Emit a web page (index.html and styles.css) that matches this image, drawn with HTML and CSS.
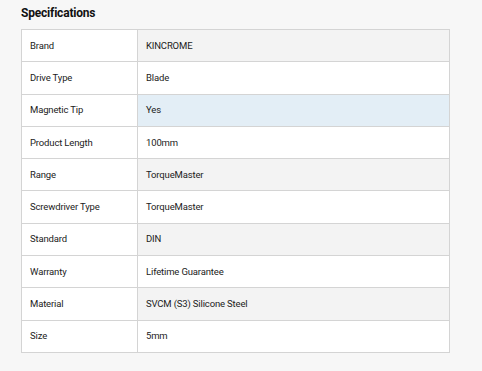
FILE: index.html
```html
<!DOCTYPE html>
<html>
<head>
<meta charset="utf-8">
<link rel="stylesheet" href="styles.css">
</head>
<body>
<div class="specs">
  <h2 class="specs-title">Specifications</h2>
  <table class="specs-table">
    <colgroup><col class="col-label"><col class="col-value"></colgroup>
    <tbody>
      <tr class="odd"><td class="label">Brand</td><td class="value">KINCROME</td></tr>
      <tr><td class="label">Drive Type</td><td class="value">Blade</td></tr>
      <tr class="odd hover"><td class="label">Magnetic Tip</td><td class="value">Yes</td></tr>
      <tr><td class="label">Product Length</td><td class="value">100mm</td></tr>
      <tr class="odd"><td class="label">Range</td><td class="value">TorqueMaster</td></tr>
      <tr><td class="label">Screwdriver Type</td><td class="value">TorqueMaster</td></tr>
      <tr class="odd"><td class="label">Standard</td><td class="value">DIN</td></tr>
      <tr><td class="label">Warranty</td><td class="value">Lifetime Guarantee</td></tr>
      <tr class="odd"><td class="label">Material</td><td class="value">SVCM (S3) Silicone Steel</td></tr>
      <tr><td class="label">Size</td><td class="value">5mm</td></tr>
    </tbody>
  </table>
</div>
</body>
</html>
```
FILE: styles.css
```css
html, body {
  margin: 0;
  padding: 0;
  background: #f7f7f7;
}
body {
  font-family: "Roboto", "Liberation Sans", sans-serif;
  color: #222;
}
.specs {
  padding: 5px 32px 0 21px;
}
.specs-title {
  margin: 0 0 8px 0;
  font-size: 12px;
  line-height: 16px;
  font-weight: 700;
  color: #111;
  letter-spacing: -0.2px;
}
.specs-table {
  width: 429px;
  table-layout: fixed;
  border-collapse: collapse;
  background: #fff;
  font-size: 9.5px;
  letter-spacing: -0.15px;
}
.col-label {
  width: 116px;
}
.specs-table td {
  border: 1px solid #d4d4d4;
  padding: 0 8px;
  height: 32.3px;
  box-sizing: border-box;
  line-height: 12px;
  vertical-align: middle;
}
.specs-table .label {
  background: #fff;
}
.specs-table .odd .value {
  background: #f3f3f3;
}
.specs-table .hover .value {
  background: #e3eef6;
}
```
